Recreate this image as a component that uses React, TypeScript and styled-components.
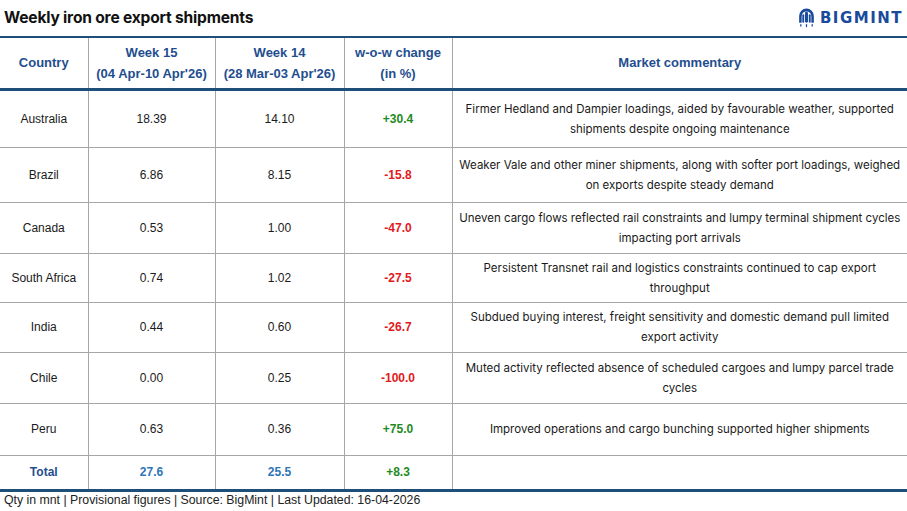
import styled, { createGlobalStyle } from "styled-components";

const GlobalStyle = createGlobalStyle`
    html, body {
        margin: 0;
        padding: 0;
        background: #ffffff;
    }
    body {
        font-family: Inter, "Liberation Sans", Arial, sans-serif;
        color: #1a1a1a;
    }
`;

const Page = styled.div`
    width: 907px;
    height: 511px;
    display: flex;
    flex-direction: column;
    overflow: hidden;
`;

const TopBar = styled.div`
    display: flex;
    align-items: center;
    justify-content: space-between;
    height: 36px;
    padding: 0 4px 0 4px;
    box-sizing: border-box;
`;

const Title = styled.h1`
    margin: 0;
    font-family: Inter, "Liberation Sans", sans-serif;
    font-size: 15.6px;
    font-weight: 700;
    color: #111;
    letter-spacing: -0.2px;
    padding-bottom: 2px;
`;

const Logo = styled.div`
    display: flex;
    align-items: center;
    gap: 4px;
    padding-bottom: 1px;
`;

const LogoText = styled.span`
    font-family: "DejaVu Sans", "Liberation Sans", sans-serif;
    font-size: 15px;
    font-weight: 700;
    letter-spacing: 1.5px;
    color: #1a4a9c;
`;

const Table = styled.table`
    width: 907px;
    border-collapse: collapse;
    table-layout: fixed;
    border-top: 2px solid #1f4e79;
    border-bottom: 3px solid #1f4e79;
`;

const HeadCell = styled.th<{ $w: number }>`
    width: ${(p) => p.$w}px;
    height: 52px;
    padding: 0;
    font-family: "Liberation Sans", Arial, sans-serif;
    font-size: 13px;
    font-weight: 700;
    line-height: 21px;
    color: #1f4e8f;
    text-align: center;
    border-left: 1px solid #a6a6a6;
    border-bottom: 3px solid #1f4e79;
    box-sizing: border-box;

    &:first-child {
        border-left: none;
    }
`;

const Row = styled.tr<{ $h: number }>`
    height: ${(p) => p.$h}px;
`;

const Cell = styled.td<{ $tone?: "up" | "down" | "total" | "label" }>`
    padding: 0;
    text-align: center;
    font-family: "Liberation Sans", Arial, sans-serif;
    font-size: 12px;
    font-weight: ${(p) => (p.$tone ? 700 : 400)};
    color: ${(p) =>
        p.$tone === "up"
            ? "#1e8a1e"
            : p.$tone === "down"
            ? "#e3191c"
            : p.$tone === "total"
            ? "#2e75b6"
            : p.$tone === "label"
            ? "#1f4e8f"
            : "#1a1a1a"};
    border-left: 1px solid #a6a6a6;
    border-top: 1px solid #a6a6a6;

    &:first-child {
        border-left: none;
    }
`;

const Commentary = styled.td`
    padding: 0 4px;
    text-align: center;
    font-family: Inter, "Liberation Sans", sans-serif;
    font-size: 11.5px;
    line-height: 20px;
    color: #1a1a1a;
    border-left: 1px solid #a6a6a6;
    border-top: 1px solid #a6a6a6;
`;

const Footer = styled.div`
    padding: 1px 4px 0 4px;
    font-family: "Liberation Sans", Arial, sans-serif;
    font-size: 12.3px;
    color: #222;
`;

type Item = {
    country: string;
    w15: string;
    w14: string;
    change: string;
    text: string;
    h: number;
};

const rows: Item[] = [
    {
        country: "Australia",
        w15: "18.39",
        w14: "14.10",
        change: "+30.4",
        text: "Firmer Hedland and Dampier loadings, aided by favourable weather, supported shipments despite ongoing maintenance",
        h: 58,
    },
    {
        country: "Brazil",
        w15: "6.86",
        w14: "8.15",
        change: "-15.8",
        text: "Weaker Vale and other miner shipments, along with softer port loadings, weighed on exports despite steady demand",
        h: 55,
    },
    {
        country: "Canada",
        w15: "0.53",
        w14: "1.00",
        change: "-47.0",
        text: "Uneven cargo flows reflected rail constraints and lumpy terminal shipment cycles impacting port arrivals",
        h: 51,
    },
    {
        country: "South Africa",
        w15: "0.74",
        w14: "1.02",
        change: "-27.5",
        text: "Persistent Transnet rail and logistics constraints continued to cap export throughput",
        h: 49,
    },
    {
        country: "India",
        w15: "0.44",
        w14: "0.60",
        change: "-26.7",
        text: "Subdued buying interest, freight sensitivity and domestic demand pull limited export activity",
        h: 50,
    },
    {
        country: "Chile",
        w15: "0.00",
        w14: "0.25",
        change: "-100.0",
        text: "Muted activity reflected absence of scheduled cargoes and lumpy parcel trade cycles",
        h: 51,
    },
    {
        country: "Peru",
        w15: "0.63",
        w14: "0.36",
        change: "+75.0",
        text: "Improved operations and cargo bunching supported higher shipments",
        h: 52,
    },
];

function LogoMark() {
    return (
        <svg width="19" height="21" viewBox="0 0 18 20">
            <path
                d="M2 15 V8.5 A7 7 0 0 1 16 8.5 V15 H13.6 V8.8 A4.6 4.6 0 0 0 4.4 8.8 V15 Z"
                fill="#1a4a9c"
            />
            <rect x="7.6" y="4.6" width="2.8" height="10.4" rx="1.4" fill="#1a4a9c" />
            <rect x="5" y="7" width="1.8" height="8" rx="0.9" fill="#1a4a9c" />
            <rect x="11.2" y="7" width="1.8" height="8" rx="0.9" fill="#1a4a9c" />
            <rect x="3" y="16.2" width="1.2" height="2.6" rx="0.6" fill="#1a4a9c" />
            <rect x="8.4" y="16.2" width="1.2" height="3" rx="0.6" fill="#1a4a9c" />
            <rect x="13.8" y="16.2" width="1.2" height="2.6" rx="0.6" fill="#1a4a9c" />
        </svg>
    );
}

export default function App() {
    return (
        <Page>
            <GlobalStyle />
            <TopBar>
                <Title>Weekly iron ore export shipments</Title>
                <Logo>
                    <LogoMark />
                    <LogoText>BIGMINT</LogoText>
                </Logo>
            </TopBar>

            <Table>
                <thead>
                    <tr>
                        <HeadCell $w={88}>Country</HeadCell>
                        <HeadCell $w={127}>
                            Week 15
                            <br />
                            (04 Apr-10 Apr'26)
                        </HeadCell>
                        <HeadCell $w={129}>
                            Week 14
                            <br />
                            (28 Mar-03 Apr'26)
                        </HeadCell>
                        <HeadCell $w={108}>
                            w-o-w change
                            <br />
                            (in %)
                        </HeadCell>
                        <HeadCell $w={455}>Market commentary</HeadCell>
                    </tr>
                </thead>
                <tbody>
                    {rows.map((r) => (
                        <Row key={r.country} $h={r.h}>
                            <Cell>{r.country}</Cell>
                            <Cell>{r.w15}</Cell>
                            <Cell>{r.w14}</Cell>
                            <Cell $tone={r.change.startsWith("+") ? "up" : "down"}>{r.change}</Cell>
                            <Commentary>{r.text}</Commentary>
                        </Row>
                    ))}
                    <Row $h={35}>
                        <Cell $tone="label">Total</Cell>
                        <Cell $tone="total">27.6</Cell>
                        <Cell $tone="total">25.5</Cell>
                        <Cell $tone="up">+8.3</Cell>
                        <Commentary />
                    </Row>
                </tbody>
            </Table>

            <Footer>Qty in mnt | Provisional figures | Source: BigMint | Last Updated: 16-04-2026</Footer>
        </Page>
    );
}
